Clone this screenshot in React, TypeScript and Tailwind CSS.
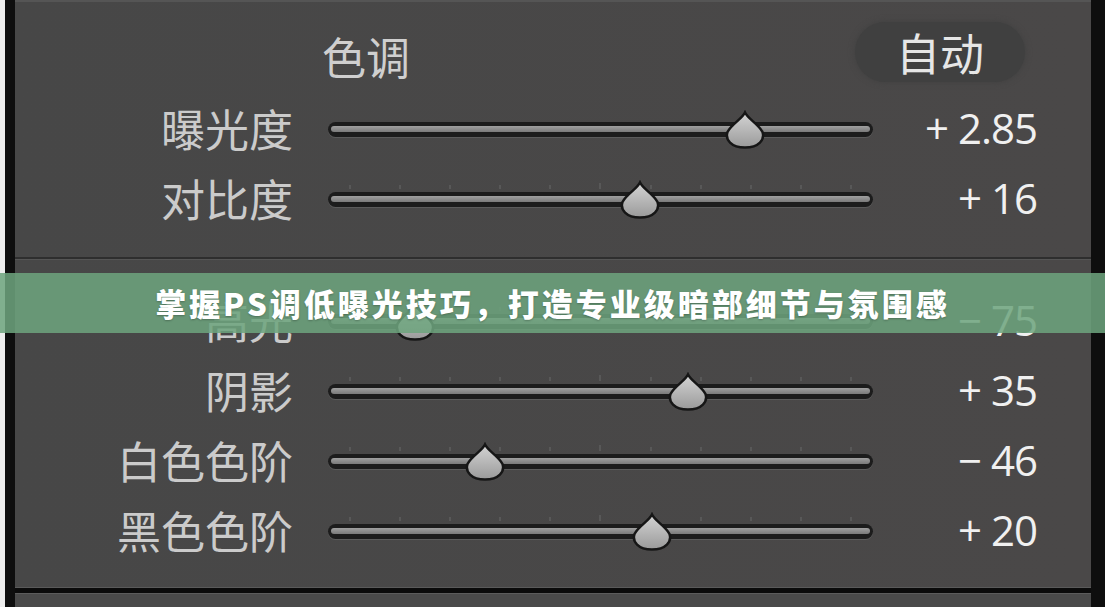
const cjk = "font-['Noto_Sans_CJK_SC','Noto_Sans',sans-serif]";
const num = "font-['Open_Sans','Noto_Sans',sans-serif]";

type Row = { label: string; value: string; pos: number; ticks: boolean };

const toneRows: Row[] = [
  { label: "曝光度", value: "+ 2.85", pos: 417, ticks: false },
  { label: "对比度", value: "+ 16", pos: 312, ticks: true },
];

const presenceRows: Row[] = [
  { label: "高光", value: "− 75", pos: 87, ticks: true },
  { label: "阴影", value: "+ 35", pos: 360, ticks: true },
  { label: "白色色阶", value: "− 46", pos: 157, ticks: true },
  { label: "黑色色阶", value: "+ 20", pos: 324, ticks: true },
];

function Thumb({ left }: { left: number }) {
  return (
    <svg
      className="absolute top-[-12px]"
      style={{ left: left - 21 }}
      width="42"
      height="40"
      viewBox="0 0 42 40"
    >
      <defs>
        <linearGradient id="thumbFill" x1="0" y1="0" x2="0" y2="1">
          <stop offset="0" stopColor="#d4d4d4" />
          <stop offset="1" stopColor="#9a9a9a" />
        </linearGradient>
      </defs>
      <path
        d="M21 2.5 C24 9 34.5 14 38.5 22 C41 29.5 35 37.5 21 37.5 C7 37.5 1 29.5 3.5 22 C7.5 14 18 9 21 2.5 Z"
        fill="url(#thumbFill)"
        stroke="#161616"
        strokeWidth="2.5"
      />
    </svg>
  );
}

function Slider({ pos, ticks }: { pos: number; ticks: boolean }) {
  return (
    <div className="w-[545px] -mt-[4px] flex flex-col">
      <div
        className={`h-[5px] mb-[3px] px-[21px] flex justify-between items-end ${ticks ? "" : "invisible"}`}
      >
        {Array.from({ length: 11 }).map((_, i) => (
          <span
            key={i}
            className={`w-[2px] bg-[#585858] ${i === 5 ? "h-[6px]" : "h-[4px]"}`}
          />
        ))}
      </div>
      <div className="relative h-[16px]">
        <div className="h-[15px] rounded-full bg-[#1c1c1c] shadow-[0_1px_0_#5b5b5b] px-[3px] pt-[4px]">
          <div className="h-[6px] rounded-full bg-gradient-to-b from-[#a0a0a0] to-[#7a7a7a]" />
        </div>
        <Thumb left={pos} />
      </div>
    </div>
  );
}

function SliderRow({ row }: { row: Row }) {
  return (
    <div className="h-[70px] flex items-center">
      <div className={`w-[278px] text-right text-[44px] leading-none text-[#cbcbcb] ${cjk}`}>
        {row.label}
      </div>
      <div className="ml-[35px]">
        <Slider pos={row.pos} ticks={row.ticks} />
      </div>
      <div
        className={`w-[164px] text-right text-[42px] leading-none tracking-[-1px] text-[#f0f0f0] ${num}`}
      >
        {row.value}
      </div>
    </div>
  );
}

export default function App() {
  return (
    <div className="relative w-[1105px] h-[607px] overflow-hidden flex bg-[#ededed]">
      <div className="w-[5px] shrink-0" />
      {/* dark frame around the develop panel */}
      <div className="flex-1 flex bg-[#0e0e0e] pl-[10px] pr-[14px]">
        <div className="flex-1 flex flex-col">
          <div className="flex-1 flex flex-col bg-gradient-to-r from-[#474747] to-[#4a4848] border-t-2 border-[#555]">
            {/* tone section */}
            <div className="h-[91px] flex items-start pt-[20px]">
              <div className={`ml-[307px] mt-[12px] text-[44px] leading-none text-[#cfcfcf] ${cjk}`}>
                色调
              </div>
              <div
                className={`ml-auto mr-[66px] w-[170px] h-[60px] rounded-full bg-[#404040] shadow-[0_0_6px_#404040] flex items-center justify-center text-[44px] leading-none text-[#e6e6e6] ${cjk}`}
              >
                自动
              </div>
            </div>
            {toneRows.map((r) => (
              <SliderRow key={r.label} row={r} />
            ))}
            <div className="h-[24px]" />
            <div className="h-[2px] bg-[#2e2e2e]" />
            <div className="h-[1px] bg-[#555555]" />
            {/* presence section */}
            <div className="pt-[25px] flex flex-col">
              {presenceRows.map((r) => (
                <SliderRow key={r.label} row={r} />
              ))}
            </div>
            <div className="flex-1 border-b border-[#5a5a5a]" />
          </div>
          <div className="h-[5px] bg-[#0b0b0b]" />
          <div className="h-[14px] bg-[#4a4a4a] border-t border-[#5c5c5c]" />
        </div>
      </div>

      {/* title banner laid over the panel */}
      <div className="absolute left-0 right-0 top-[273px] h-[60px] bg-[rgba(110,164,126,0.86)] flex items-center justify-center">
        <span
          className={`text-[31px] font-black tracking-[3px] text-white [text-shadow:0_1px_2px_rgba(0,0,0,0.25)] ${cjk}`}
        >
          掌握PS调低曝光技巧，打造专业级暗部细节与氛围感
        </span>
      </div>
    </div>
  );
}
